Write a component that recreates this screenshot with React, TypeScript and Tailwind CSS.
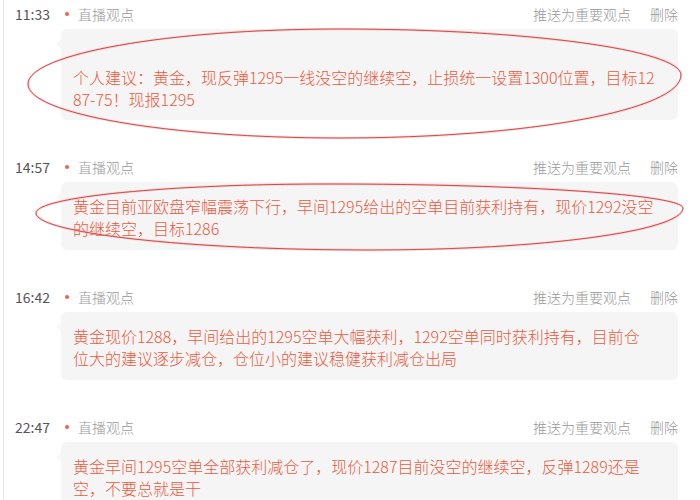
import React from "react";

type Entry = { time: string; lines: string[]; pt: string };

const entries: Entry[] = [
  {
    time: "11:33",
    pt: "pt-[37px] pb-[10px]",
    lines: [
      "个人建议：黄金，现反弹1295一线没空的继续空，止损统一设置1300位置，目标12",
      "87-75！现报1295",
    ],
  },
  {
    time: "14:57",
    pt: "pt-[13px] pb-[11px]",
    lines: [
      "黄金目前亚欧盘窄幅震荡下行，早间1295给出的空单目前获利持有，现价1292没空",
      "的继续空，目标1286",
    ],
  },
  {
    time: "16:42",
    pt: "pt-[13px] pb-[11px]",
    lines: [
      "黄金现价1288，早间给出的1295空单大幅获利，1292空单同时获利持有，目前仓",
      "位大的建议逐步减仓，仓位小的建议稳健获利减仓出局",
    ],
  },
  {
    time: "22:47",
    pt: "pt-[13px] pb-[11px]",
    lines: [
      "黄金早间1295空单全部获利减仓了，现价1287目前没空的继续空，反弹1289还是",
      "空，不要总就是干",
    ],
  },
];

export default function App() {
  return (
    <div
      className="relative w-[700px] h-[500px] overflow-hidden bg-white"
      style={{ fontFamily: '"Noto Sans CJK SC", "Noto Sans", sans-serif' }}
    >
      <div className="ml-[3px] min-h-[500px] border-l border-[#e6e6e6] pl-[11px] pr-[22px] pt-[4px]">
        {entries.map((e) => (
          <div key={e.time} className="mb-[37px]">
            <div className="flex h-[20px] items-center text-[14px] leading-[20px] font-light">
              <span className="w-[50px] text-[#555555] font-normal">{e.time}</span>
              <span className="h-[4px] w-[4px] rounded-full bg-[#e8644c]" />
              <span className="ml-[9px] text-[#999999]">直播观点</span>
              <span className="ml-auto text-[#999999]">推送为重要观点</span>
              <span className="ml-[19px] text-[#999999]">删除</span>
            </div>
            <div
              className={`relative ml-[46px] mt-[5px] rounded-[6px] bg-[#f5f5f5] pl-[12px] pr-[10px] ${e.pt} text-[16px] leading-[22px] font-light text-[#ea5a3f]`}
            >
              <span className="absolute left-[-5px] top-[10px] h-0 w-0 border-y-[5px] border-r-[5px] border-y-transparent border-r-[#f8f8f8]" />
              {e.lines.map((l, i) => (
                <div key={i} className="whitespace-nowrap">
                  {l}
                </div>
              ))}
            </div>
          </div>
        ))}
      </div>
      <svg
        className="pointer-events-none absolute left-0 top-0"
        width="700"
        height="500"
        viewBox="0 0 700 500"
        fill="none"
      >
        <path
          d="M28 84 C28 54 168 29 340 29 C528 29 681 50 681 75 C681 110 528 138 340 138 C168 138 28 114 28 84 Z"
          stroke="#f2a9a9"
          strokeWidth="2.4"
          opacity="0.45"
        />
        <path
          d="M28 84 C28 54 168 29 340 29 C528 29 681 50 681 75 C681 110 528 138 340 138 C168 138 28 114 28 84 Z"
          stroke="#d6474a"
          strokeWidth="1"
        />
        <path
          d="M36 213 C36 197 168 184 330 184 C524 184 683 195 683 208 C683 231 542 250 370 250 C186 250 36 233 36 213 Z"
          stroke="#f2a9a9"
          strokeWidth="2.4"
          opacity="0.45"
        />
        <path
          d="M36 213 C36 197 168 184 330 184 C524 184 683 195 683 208 C683 231 542 250 370 250 C186 250 36 233 36 213 Z"
          stroke="#d6474a"
          strokeWidth="1"
        />
      </svg>
    </div>
  );
}
